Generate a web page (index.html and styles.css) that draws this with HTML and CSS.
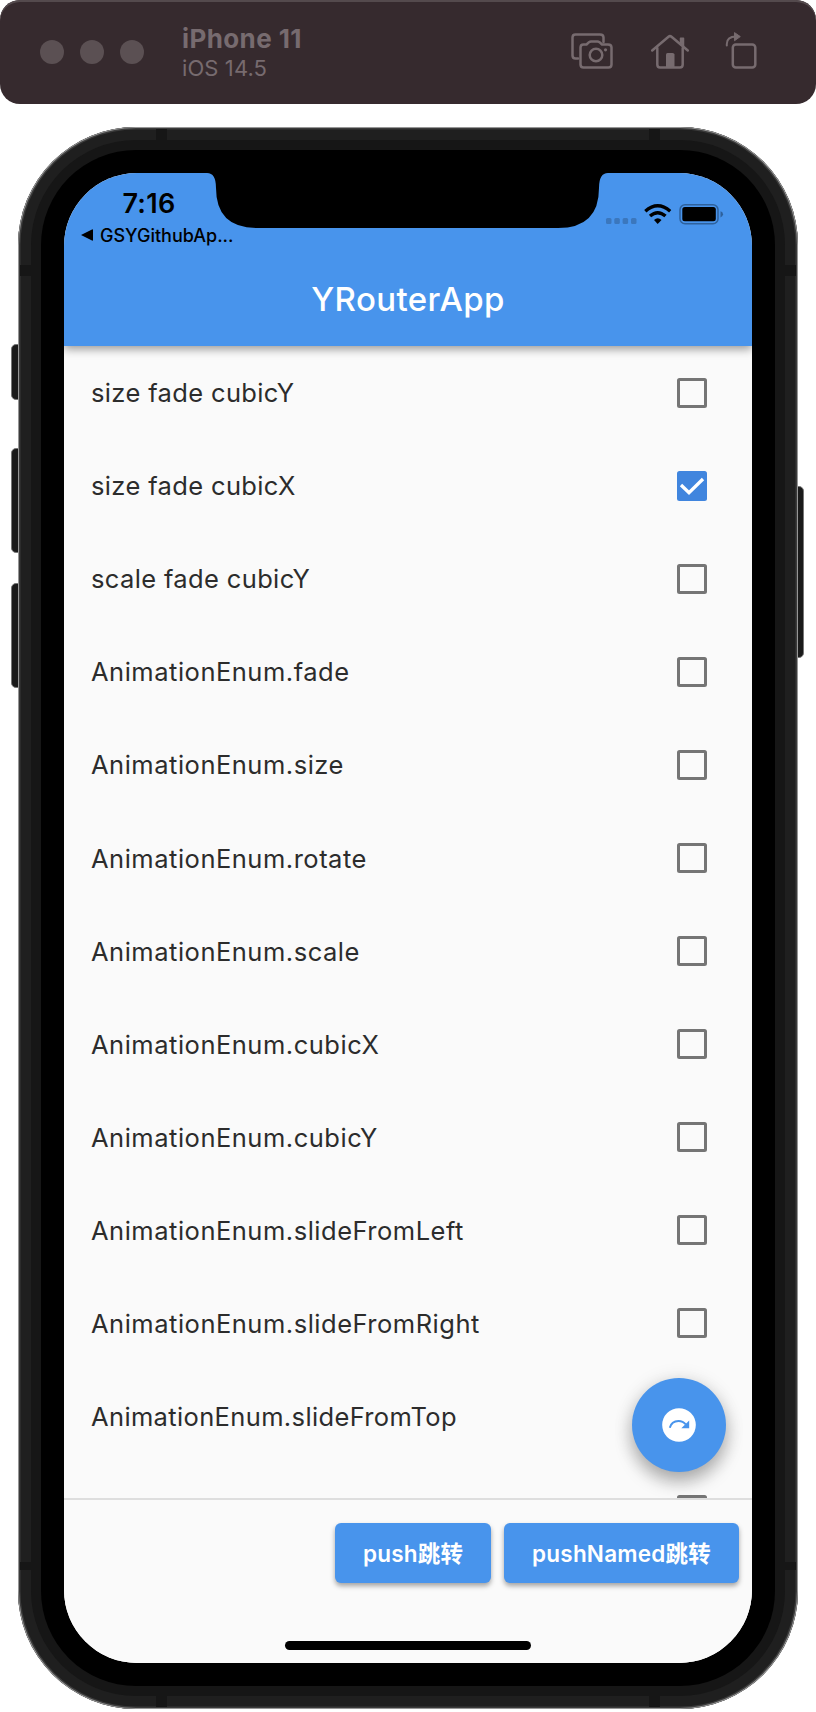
FILE: index.html
```html
<!DOCTYPE html>
<html lang="en">
<head>
<meta charset="utf-8">
<title>YRouterApp</title>
<link rel="stylesheet" href="styles.css">
</head>
<body>
<header class="toolbar">
  <div class="lights"><i></i><i></i><i></i></div>
  <div class="device"><strong>iPhone 11</strong><span>iOS 14.5</span></div>
  <svg class="tools" width="190" height="40" viewBox="0 0 190 40" fill="none" stroke="#776b6f" stroke-width="2.5" stroke-linejoin="round" stroke-linecap="round">
    <path d="M9 27.500H6.500Q3.500 27.500 3.500 24.500V6.500Q3.500 3.500 6.500 3.500H31Q34.500 3.500 34.500 6.500V11"/>
    <path d="M14.500 13.500H17.500L20 11.200Q21 10.500 22 10.500H28.500Q29.500 10.500 30.500 11.200L33 13.500H39Q42.500 13.500 42.500 16.500V33.500Q42.500 36.500 39.500 36.500H14.500Q11.500 36.500 11.500 33.500V16.500Q11.500 13.500 14.500 13.500Z"/>
    <circle cx="27" cy="24" r="6.300"/><circle cx="36.500" cy="18.800" r="1.600" fill="#776b6f" stroke="none"/>
    <path d="M83.200 19.500L99.500 5.800Q101 4.500 102.500 5.800L118.800 19.500M88.300 17V33.500Q88.300 36.500 91 36.500H111Q113.700 36.500 113.700 33.500V17"/>
    <path d="M111.500 7.200H114.500V15L111.500 12Z" fill="#776b6f" stroke-width="1.500"/>
    <path d="M97 36V23.500Q97 22 98.500 22H103.500Q105.500 22 105.500 23.500V36Z" fill="#776b6f" stroke="none"/>
    <rect x="163.800" y="13.500" width="22.500" height="23" rx="3"/>
    <path d="M157.800 14.500V13Q157.800 5.500 167 5.500" stroke-width="2"/>
    <path d="M165.800 1.800L171.300 5.600L165.800 9.500Z" fill="#776b6f" stroke-width="1"/>
  </svg>
</header>
<main class="phone">
  <b class="key key-mute"></b><b class="key key-up"></b><b class="key key-down"></b><b class="key key-power"></b>
  <div class="metal">
    <b class="seam v t l"></b><b class="seam v t r"></b><b class="seam v b l"></b><b class="seam v b r"></b>
    <b class="seam h t l"></b><b class="seam h t r"></b><b class="seam h b l"></b><b class="seam h b r"></b>
    <div class="rim"><div class="bezel">
      <div class="screen">
        <div class="appbar">
          <svg class="notch" width="402" height="56" viewBox="0 0 402 56"><path d="M0 0Q9 0 9 15Q9 55 50 55H351Q392 55 392 15Q392 0 401 0Z"/></svg>
          <div class="status">
            <div class="time">7:16</div>
            <div class="back"><svg width="12" height="12" viewBox="0 0 12 12"><path d="M0 6L11 .5Q12 0 12 1V11Q12 12 11 11.500Z"/></svg><span>GSYGithubAp...</span></div>
          </div>
          <svg class="indicators" width="120" height="24" viewBox="0 0 120 24">
            <g fill="#3b77bd"><rect x="1" y="15" width="5.500" height="6" rx="1.500"/><rect x="9.300" y="15" width="5.500" height="6" rx="1.500"/><rect x="17.600" y="15" width="5.500" height="6" rx="1.500"/><rect x="26" y="15" width="5.500" height="6" rx="1.500"/></g>
            <g fill="none" stroke="#000" stroke-width="3.400"><path d="M40.300 8.200Q52.700-2.600 65.200 8.200"/><path d="M45 13Q52.700 6.300 60.500 13"/></g>
            <path d="M49 17Q52.700 13.700 56.500 17L52.700 21Z"/>
            <rect x="75" y="1.700" width="38" height="19" rx="5" fill="none" stroke="#2e619c" stroke-width="1.500"/>
            <rect x="77.300" y="4" width="33.500" height="14.300" rx="2.500"/>
            <path d="M115.500 8.300Q118 9 118 11.300Q118 13.700 115.500 14.500Z" fill="#2e619c"/>
          </svg>
          <h1>YRouterApp</h1>
        </div>
        <ul class="list">
          <li class="combo"><span>size fade cubicY</span><i class="box"></i></li>
          <li class="combo"><span>size fade cubicX</span><i class="box on"><svg width="30" height="30" viewBox="0 0 30 30"><path d="M4 14L12 21.800L26 8" fill="none" stroke="#fff" stroke-width="3.300"/></svg></i></li>
          <li class="combo"><span>scale fade cubicY</span><i class="box"></i></li>
          <li><span>AnimationEnum.fade</span><i class="box"></i></li>
          <li><span>AnimationEnum.size</span><i class="box"></i></li>
          <li><span>AnimationEnum.rotate</span><i class="box"></i></li>
          <li><span>AnimationEnum.scale</span><i class="box"></i></li>
          <li><span>AnimationEnum.cubicX</span><i class="box"></i></li>
          <li><span>AnimationEnum.cubicY</span><i class="box"></i></li>
          <li><span>AnimationEnum.slideFromLeft</span><i class="box"></i></li>
          <li><span>AnimationEnum.slideFromRight</span><i class="box"></i></li>
          <li class="combo"><span>AnimationEnum.slideFromTop</span><i class="box"></i></li>
          <li><span></span><i class="box"></i></li>
        </ul>
        <div class="fab"><svg width="34" height="34" viewBox="0 0 34 34"><circle cx="17" cy="17" r="16.800" fill="#fff"/><path d="M7.800 19.800Q9.500 13 16.500 13Q21 13 23.800 16.500" fill="none" stroke="#4894ec" stroke-width="2"/><path d="M27.200 12.500V20.300H19.300Z" fill="#4894ec"/></svg></div>
        <footer class="actions">
          <div class="buttons"><button class="btn push">push跳转</button><button class="btn named">pushNamed跳转</button></div>
          <div class="home"></div>
        </footer>
      </div>
    </div></div>
  </div>
</main>
</body>
</html>
```

FILE: styles.css
```css
* { box-sizing: border-box; }
body { margin: 0; width: 816px; height: 1712px; overflow: hidden; background: #fff; font-family: Inter, "Noto Sans CJK SC", sans-serif; }
.toolbar { height: 104px; border-radius: 20px; background: #362a2e; box-shadow: inset 0 2px 0 #544a4d; display: flex; align-items: center; padding-left: 40px; color: #776b6f; }
.lights { display: flex; gap: 16px; width: 142px; }
.lights i { width: 24px; height: 24px; border-radius: 50%; background: #5b5053; }
.device { width: 387px; padding-top: 1px; display: flex; flex-direction: column; }
.device strong { font-size: 26px; line-height: 31px; font-weight: 700; letter-spacing: .4px; }
.device span { font-size: 22px; line-height: 28px; letter-spacing: .1px; }
.tools { margin-top: -2px; }

.phone { position: relative; margin: 23px 18px 0; height: 1582px; }
.metal { position: relative; height: 100%; padding: 13px; border-radius: 118px; background: #1f1f1f; box-shadow: inset 0 0 0 1px #969696, inset 0 0 0 2.500px #3b3b3b; }
.rim { height: 100%; padding: 10px; border-radius: 105px; background: #161616; }
.bezel { height: 100%; padding: 23px; border-radius: 95px; background: #000; }
.screen { position: relative; height: 1490px; overflow: hidden; border-radius: 73px; background: #fafafa; display: flex; flex-direction: column; }
.key { position: absolute; left: -7px; width: 12px; border-radius: 5px; background: #1a1a1a; border: 1px solid #777; }
.key-mute { top: 217px; height: 56px; }
.key-up { top: 321px; height: 105px; }
.key-down { top: 456px; height: 105px; }
.key-power { left: auto; right: -6px; top: 359px; height: 172px; }
.seam { position: absolute; width: 11px; height: 11px; background: #161616; }
.v.t { top: 2px; } .v.b { bottom: 2px; } .v.l { left: 138px; } .v.r { right: 138px; }
.h.l { left: 2px; } .h.r { right: 2px; } .h.t { top: 138px; } .h.b { bottom: 139px; height: 8px; }

.appbar { position: relative; z-index: 1; flex: none; height: 173px; background: #4894ec; box-shadow: 0 3px 9px rgba(0,0,0,.4); display: flex; flex-direction: column; }
.notch { position: absolute; left: 143px; top: 0; }
.status { height: 80px; padding: 15px 0 0 17px; }
.time { width: 136px; text-align: center; font-size: 27px; font-weight: 600; line-height: 32px; letter-spacing: .3px; }
.back { display: flex; align-items: center; gap: 7px; height: 28px; margin-top: 1px; font-size: 18px; font-weight: 500; }
.indicators { position: absolute; left: 541px; top: 30px; }
h1 { margin: 0; padding-top: 25px; text-align: center; color: #fff; font-size: 33px; font-weight: 500; line-height: 42px; letter-spacing: .4px; }
.list { list-style: none; margin: 0; padding: 0; height: 1152px; flex: none; overflow: hidden; }
.list li { height: 93.100px; padding: 0 45px 0 27px; display: flex; align-items: center; justify-content: space-between; font-size: 25.500px; letter-spacing: .51px; color: #2c2c2c; }
.list .combo { letter-spacing: .36px; }
.box { display: block; width: 30px; height: 30px; border: 3px solid #757575; border-radius: 2.500px; }
.box.on { border: 0; background: #4085de; }
.box svg { display: block; }
.fab { position: absolute; z-index: 2; left: 568px; top: 1205px; width: 94px; height: 94px; border-radius: 50%; background: #4894ec; display: grid; place-items: center; box-shadow: 0 10px 17px rgba(0,0,0,.27), 0 2px 20px rgba(0,0,0,.12); pointer-events: auto; }
.actions { position: relative; flex: 1; border-top: 2px solid #dedede; background: #fafafa; padding: 23px 13px 0; display: flex; flex-direction: column; align-items: center; }
.buttons { align-self: stretch; display: flex; justify-content: flex-end; gap: 13px; }
.btn { height: 60px; padding: 0 0 3px; border: 0; border-radius: 6px; background: #4894ec; box-shadow: 0 3px 5px rgba(0,0,0,.35); color: #fff; font: 600 22.500px Inter, "Noto Sans CJK SC", sans-serif; }
.push { width: 156px; letter-spacing: .2px; }
.named { width: 235px; letter-spacing: .2px; }
.home { width: 246px; height: 9px; margin-top: 58px; border-radius: 5px; background: #000; }
```
